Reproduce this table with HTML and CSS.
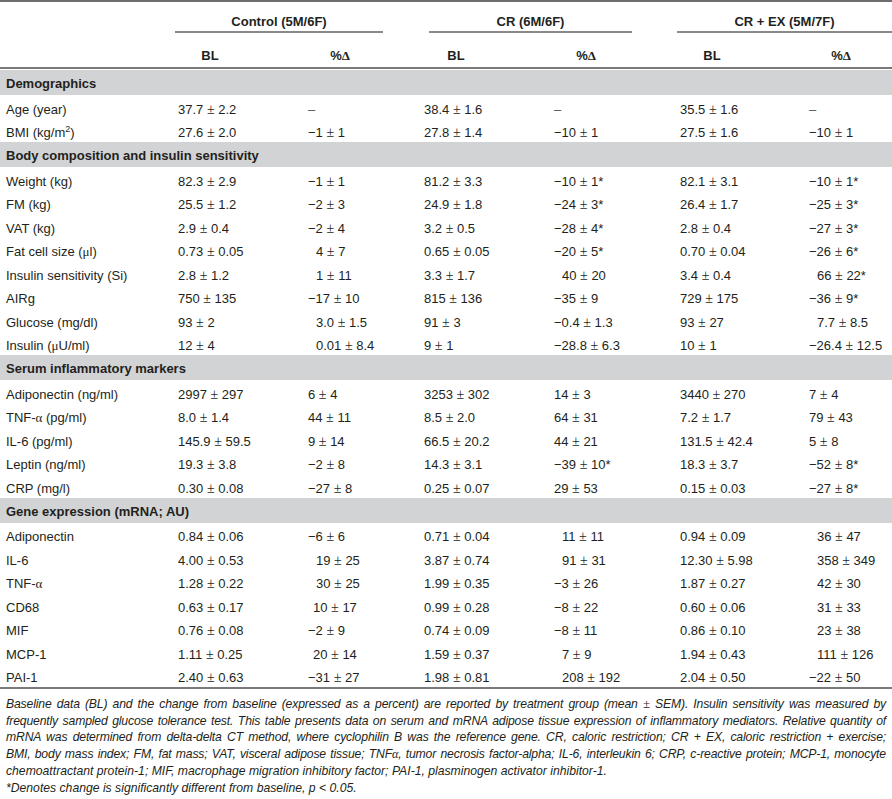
FILE: index.html
```html
<!DOCTYPE html>
<html>
<head>
<meta charset="utf-8">
<link rel="stylesheet" href="styles.css">
</head>
<body>
<div class="table">
  <div class="row head1">
    <div class="c lbl"></div>
    <div class="grp g1">Control (5M/6F)</div>
    <div class="grp g2">CR (6M/6F)</div>
    <div class="grp g3">CR + EX (5M/7F)</div>
  </div>
  <div class="row head2">
    <div class="c lbl"></div>
    <div class="c"><span class="hb">BL</span></div>
    <div class="c"><span class="hb">%<span class="sym">Δ</span></span></div>
    <div class="c"><span class="hb">BL</span></div>
    <div class="c"><span class="hb">%<span class="sym">Δ</span></span></div>
    <div class="c"><span class="hb">BL</span></div>
    <div class="c"><span class="hb">%<span class="sym">Δ</span></span></div>
  </div>

  <div class="band first">Demographics</div>
  <div class="row"><div class="c">Age (year)</div><div class="c">37.7 <span class="pm">±</span> 2.2</div><div class="c dash">–</div><div class="c">38.4 <span class="pm">±</span> 1.6</div><div class="c dash">–</div><div class="c">35.5 <span class="pm">±</span> 1.6</div><div class="c dash">–</div></div>
  <div class="row"><div class="c">BMI (kg/m<sup>2</sup>)</div><div class="c">27.6 <span class="pm">±</span> 2.0</div><div class="c">−1 <span class="pm">±</span> 1</div><div class="c">27.8 <span class="pm">±</span> 1.4</div><div class="c">−10 <span class="pm">±</span> 1</div><div class="c">27.5 <span class="pm">±</span> 1.6</div><div class="c">−10 <span class="pm">±</span> 1</div></div>

  <div class="band">Body composition and insulin sensitivity</div>
  <div class="row"><div class="c">Weight (kg)</div><div class="c">82.3 <span class="pm">±</span> 2.9</div><div class="c">−1 <span class="pm">±</span> 1</div><div class="c">81.2 <span class="pm">±</span> 3.3</div><div class="c">−10 <span class="pm">±</span> 1*</div><div class="c">82.1 <span class="pm">±</span> 3.1</div><div class="c">−10 <span class="pm">±</span> 1*</div></div>
  <div class="row"><div class="c">FM (kg)</div><div class="c">25.5 <span class="pm">±</span> 1.2</div><div class="c">−2 <span class="pm">±</span> 3</div><div class="c">24.9 <span class="pm">±</span> 1.8</div><div class="c">−24 <span class="pm">±</span> 3*</div><div class="c">26.4 <span class="pm">±</span> 1.7</div><div class="c">−25 <span class="pm">±</span> 3*</div></div>
  <div class="row"><div class="c">VAT (kg)</div><div class="c">2.9 <span class="pm">±</span> 0.4</div><div class="c">−2 <span class="pm">±</span> 4</div><div class="c">3.2 <span class="pm">±</span> 0.5</div><div class="c">−28 <span class="pm">±</span> 4*</div><div class="c">2.8 <span class="pm">±</span> 0.4</div><div class="c">−27 <span class="pm">±</span> 3*</div></div>
  <div class="row"><div class="c">Fat cell size (<span class="sym">μ</span>l)</div><div class="c">0.73 <span class="pm">±</span> 0.05</div><div class="c ind">4 <span class="pm">±</span> 7</div><div class="c">0.65 <span class="pm">±</span> 0.05</div><div class="c">−20 <span class="pm">±</span> 5*</div><div class="c">0.70 <span class="pm">±</span> 0.04</div><div class="c">−26 <span class="pm">±</span> 6*</div></div>
  <div class="row"><div class="c">Insulin sensitivity (Si)</div><div class="c">2.8 <span class="pm">±</span> 1.2</div><div class="c ind">1 <span class="pm">±</span> 11</div><div class="c">3.3 <span class="pm">±</span> 1.7</div><div class="c ind">40 <span class="pm">±</span> 20</div><div class="c">3.4 <span class="pm">±</span> 0.4</div><div class="c ind">66 <span class="pm">±</span> 22*</div></div>
  <div class="row"><div class="c">AIRg</div><div class="c">750 <span class="pm">±</span> 135</div><div class="c">−17 <span class="pm">±</span> 10</div><div class="c">815 <span class="pm">±</span> 136</div><div class="c">−35 <span class="pm">±</span> 9</div><div class="c">729 <span class="pm">±</span> 175</div><div class="c">−36 <span class="pm">±</span> 9*</div></div>
  <div class="row"><div class="c">Glucose (mg/dl)</div><div class="c">93 <span class="pm">±</span> 2</div><div class="c ind">3.0 <span class="pm">±</span> 1.5</div><div class="c">91 <span class="pm">±</span> 3</div><div class="c">−0.4 <span class="pm">±</span> 1.3</div><div class="c">93 <span class="pm">±</span> 27</div><div class="c ind">7.7 <span class="pm">±</span> 8.5</div></div>
  <div class="row"><div class="c">Insulin (<span class="sym">μ</span>U/ml)</div><div class="c">12 <span class="pm">±</span> 4</div><div class="c ind">0.01 <span class="pm">±</span> 8.4</div><div class="c">9 <span class="pm">±</span> 1</div><div class="c">−28.8 <span class="pm">±</span> 6.3</div><div class="c">10 <span class="pm">±</span> 1</div><div class="c">−26.4 <span class="pm">±</span> 12.5</div></div>

  <div class="band">Serum inflammatory markers</div>
  <div class="row"><div class="c">Adiponectin (ng/ml)</div><div class="c">2997 <span class="pm">±</span> 297</div><div class="c">6 <span class="pm">±</span> 4</div><div class="c">3253 <span class="pm">±</span> 302</div><div class="c">14 <span class="pm">±</span> 3</div><div class="c">3440 <span class="pm">±</span> 270</div><div class="c">7 <span class="pm">±</span> 4</div></div>
  <div class="row"><div class="c">TNF-<span class="sym">α</span> (pg/ml)</div><div class="c">8.0 <span class="pm">±</span> 1.4</div><div class="c">44 <span class="pm">±</span> 11</div><div class="c">8.5 <span class="pm">±</span> 2.0</div><div class="c">64 <span class="pm">±</span> 31</div><div class="c">7.2 <span class="pm">±</span> 1.7</div><div class="c">79 <span class="pm">±</span> 43</div></div>
  <div class="row"><div class="c">IL-6 (pg/ml)</div><div class="c">145.9 <span class="pm">±</span> 59.5</div><div class="c">9 <span class="pm">±</span> 14</div><div class="c">66.5 <span class="pm">±</span> 20.2</div><div class="c">44 <span class="pm">±</span> 21</div><div class="c">131.5 <span class="pm">±</span> 42.4</div><div class="c">5 <span class="pm">±</span> 8</div></div>
  <div class="row"><div class="c">Leptin (ng/ml)</div><div class="c">19.3 <span class="pm">±</span> 3.8</div><div class="c">−2 <span class="pm">±</span> 8</div><div class="c">14.3 <span class="pm">±</span> 3.1</div><div class="c">−39 <span class="pm">±</span> 10*</div><div class="c">18.3 <span class="pm">±</span> 3.7</div><div class="c">−52 <span class="pm">±</span> 8*</div></div>
  <div class="row"><div class="c">CRP (mg/l)</div><div class="c">0.30 <span class="pm">±</span> 0.08</div><div class="c">−27 <span class="pm">±</span> 8</div><div class="c">0.25 <span class="pm">±</span> 0.07</div><div class="c">29 <span class="pm">±</span> 53</div><div class="c">0.15 <span class="pm">±</span> 0.03</div><div class="c">−27 <span class="pm">±</span> 8*</div></div>

  <div class="band">Gene expression (mRNA; AU)</div>
  <div class="row"><div class="c">Adiponectin</div><div class="c">0.84 <span class="pm">±</span> 0.06</div><div class="c">−6 <span class="pm">±</span> 6</div><div class="c">0.71 <span class="pm">±</span> 0.04</div><div class="c ind">11 <span class="pm">±</span> 11</div><div class="c">0.94 <span class="pm">±</span> 0.09</div><div class="c ind">36 <span class="pm">±</span> 47</div></div>
  <div class="row"><div class="c">IL-6</div><div class="c">4.00 <span class="pm">±</span> 0.53</div><div class="c ind">19 <span class="pm">±</span> 25</div><div class="c">3.87 <span class="pm">±</span> 0.74</div><div class="c ind">91 <span class="pm">±</span> 31</div><div class="c">12.30 <span class="pm">±</span> 5.98</div><div class="c ind">358 <span class="pm">±</span> 349</div></div>
  <div class="row"><div class="c">TNF-<span class="sym">α</span></div><div class="c">1.28 <span class="pm">±</span> 0.22</div><div class="c ind">30 <span class="pm">±</span> 25</div><div class="c">1.99 <span class="pm">±</span> 0.35</div><div class="c">−3 <span class="pm">±</span> 26</div><div class="c">1.87 <span class="pm">±</span> 0.27</div><div class="c ind">42 <span class="pm">±</span> 30</div></div>
  <div class="row"><div class="c">CD68</div><div class="c">0.63 <span class="pm">±</span> 0.17</div><div class="c ind2">10 <span class="pm">±</span> 17</div><div class="c">0.99 <span class="pm">±</span> 0.28</div><div class="c">−8 <span class="pm">±</span> 22</div><div class="c">0.60 <span class="pm">±</span> 0.06</div><div class="c ind">31 <span class="pm">±</span> 33</div></div>
  <div class="row"><div class="c">MIF</div><div class="c">0.76 <span class="pm">±</span> 0.08</div><div class="c">−2 <span class="pm">±</span> 9</div><div class="c">0.74 <span class="pm">±</span> 0.09</div><div class="c">−8 <span class="pm">±</span> 11</div><div class="c">0.86 <span class="pm">±</span> 0.10</div><div class="c ind">23 <span class="pm">±</span> 38</div></div>
  <div class="row"><div class="c">MCP-1</div><div class="c">1.11 <span class="pm">±</span> 0.25</div><div class="c ind2">20 <span class="pm">±</span> 14</div><div class="c">1.59 <span class="pm">±</span> 0.37</div><div class="c ind">7 <span class="pm">±</span> 9</div><div class="c">1.94 <span class="pm">±</span> 0.43</div><div class="c ind">111 <span class="pm">±</span> 126</div></div>
  <div class="row last"><div class="c">PAI-1</div><div class="c">2.40 <span class="pm">±</span> 0.63</div><div class="c">−31 <span class="pm">±</span> 27</div><div class="c">1.98 <span class="pm">±</span> 0.81</div><div class="c ind">208 <span class="pm">±</span> 192</div><div class="c">2.04 <span class="pm">±</span> 0.50</div><div class="c">−22 <span class="pm">±</span> 50</div></div>
</div>

<div class="notes">
  <div class="ln j">Baseline data (BL) and the change from baseline (expressed as a percent) are reported by treatment group (mean <span class="pm">±</span> SEM). Insulin sensitivity was measured by</div>
  <div class="ln j">frequently sampled glucose tolerance test. This table presents data on serum and mRNA adipose tissue expression of inflammatory mediators. Relative quantity of</div>
  <div class="ln j">mRNA was determined from delta-delta CT method, where cyclophilin B was the reference gene. CR, caloric restriction; CR + EX, caloric restriction + exercise;</div>
  <div class="ln j">BMI, body mass index; FM, fat mass; VAT, visceral adipose tissue; TNF<span class="sym">α</span>, tumor necrosis factor-alpha; IL-6, interleukin 6; CRP, c-reactive protein; MCP-1, monocyte</div>
  <div class="ln">chemoattractant protein-1; MIF, macrophage migration inhibitory factor; PAI-1, plasminogen activator inhibitor-1.</div>
  <div class="ln">*Denotes change is significantly different from baseline, p &lt; 0.05.</div>
</div>
</body>
</html>
```

FILE: styles.css
```css
html, body {
  margin: 0;
  padding: 0;
  background: #ffffff;
}
body {
  width: 892px;
  font-family: "Liberation Sans", Arial, sans-serif;
  font-size: 13px;
  color: #231f20;
}
.table {
  border-top: 2px solid #6d6d6d;
}
.row {
  display: grid;
  grid-template-columns: 172px 130px 116px 130px 126px 129px 89px;
  height: 23.5px;
  line-height: 18px;
  padding-top: 5.5px;
  box-sizing: border-box;
}
.c {
  padding-left: 6px;
  white-space: nowrap;
}
.ind { padding-left: 14px; }
.ind2 { padding-left: 11px; }
.dash { color: #555; }
.pm {
  font-family: "Liberation Serif", "Times New Roman", serif;
  font-size: 14px;
}
.sym {
  font-family: "Liberation Serif", "Times New Roman", serif;
}
sup {
  font-size: 9px;
  line-height: 0;
  vertical-align: 5px;
}
.head1 {
  height: 31px;
  line-height: 16px;
  padding-top: 0;
  font-weight: bold;
  grid-template-columns: 172px 246px 256px 218px;
}
.grp {
  padding-top: 12px;
  height: 17px;
  text-align: center;
  border-bottom: 2px solid #8a8a8a;
  white-space: nowrap;
}
.g1 { margin: 0 35px 0 3px; }
.g2 { margin: 0 42px 0 11px; }
.g3 { margin: 0 0 0 3px; }
.head2 {
  height: 32px;
  line-height: 16px;
  font-weight: bold;
  padding-top: 2px;
  border-bottom: 2px solid #7a7a7a;
  box-sizing: content-box;
}
.head2 .c {
  padding-top: 13px;
}
.hb {
  display: inline-block;
  width: 64px;
  text-align: center;
}
.band {
  background: #d2d3d5;
  height: 25px;
  line-height: 21px;
  padding-top: 3px;
  box-sizing: border-box;
  font-weight: bold;
  padding-left: 6px;
}
.band.first {
  margin-top: 1px;
}
.row.last {
  height: 25.5px;
  border-bottom: 2px solid #7a7a7a;
}
.notes {
  padding: 7px 6px 0 6px;
  font-style: italic;
  font-size: 12.2px;
  line-height: 16.7px;
  color: #231f20;
}
.notes .pm { font-size: 13px; font-style: normal; }
.ln { white-space: nowrap; }
.ln.j {
  text-align: justify;
  text-align-last: justify;
  white-space: normal;
  letter-spacing: -0.15px;
}
```
